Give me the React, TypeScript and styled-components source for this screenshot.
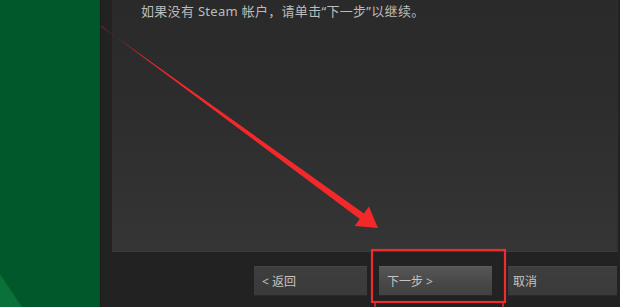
import React from "react";
import styled, { createGlobalStyle } from "styled-components";

const Global = createGlobalStyle`
  html, body { margin: 0; padding: 0; background: #1d1d1d; }
  body { font-family: "Noto Sans", "Noto Sans CJK SC", sans-serif; }
`;

const Screen = styled.div`
  position: relative;
  width: 620px;
  height: 307px;
  display: flex;
  overflow: hidden;
  background: #1e1e1e;
`;

const GreenPanel = styled.div`
  position: relative;
  width: 100px;
  flex: 0 0 100px;
  background: #01582b;
  &::after {
    content: "";
    position: absolute;
    left: 0;
    bottom: 0;
    width: 22px;
    height: 33px;
    background: #0a7138;
    clip-path: polygon(0 0, 100% 100%, 0 100%);
  }
`;

const Window = styled.div`
  flex: 1;
  display: flex;
  flex-direction: column;
  background: #222222;
  border-left: 1px solid #1a1a1a;
`;

const Body = styled.div`
  flex: 0 0 252px;
  display: flex;
  padding: 0 2px 0 11px;
`;

const Panel = styled.div`
  flex: 1;
  background: linear-gradient(#2a2a2a, #2d2d2d 45%, #353535);
  border-right: 1px solid #2f2f2f;
  border-bottom: 1px solid #3a3a3a;
  padding: 0 0 0 29px;
`;

const Message = styled.p`
  margin: 0;
  padding-top: 1px;
  font-size: 13px;
  line-height: 20px;
  letter-spacing: 0.3px;
  color: #bcbcbc;
  white-space: nowrap;
`;

const Footer = styled.div`
  flex: 1;
  display: flex;
  justify-content: flex-end;
  align-items: flex-start;
  padding: 14px 3px 0 0;
`;

const Button = styled.div<{ $primary?: boolean; $w: number; $gap: number; $pad: number }>`
  box-sizing: border-box;
  width: ${(p) => p.$w}px;
  height: 30px;
  margin-left: ${(p) => p.$gap}px;
  padding-left: ${(p) => p.$pad}px;
  display: flex;
  align-items: center;
  font-size: 12px;
  color: #c4c4c4;
  white-space: nowrap;
  background: ${(p) =>
    p.$primary ? "linear-gradient(#565656, #474747 60%, #424242)" : "linear-gradient(#3e3e3e, #3a3a3a)"};
  border-top: 1px solid ${(p) => (p.$primary ? "#5e5e5e" : "#444")};
  border-bottom: 1px solid #2a2a2a;
`;

const Overlay = styled.svg`
  position: absolute;
  left: 0;
  top: 0;
  pointer-events: none;
`;

export default function App() {
  return (
    <>
      <Global />
      <Screen>
        <GreenPanel />
        <Window>
          <Body>
            <Panel>
              <Message>如果没有 Steam 帐户，请单击“下一步”以继续。</Message>
            </Panel>
          </Body>
          <Footer>
            <Button $w={113} $gap={0} $pad={8}>&lt; 返回</Button>
            <Button $primary $w={113} $gap={12} $pad={8}>下一步 &gt;</Button>
            <Button $w={109} $gap={16} $pad={5}>取消</Button>
          </Footer>
        </Window>
        <Overlay width="620" height="307" viewBox="0 0 620 307">
          <polygon
            points="100.7,25.6 101.3,26.4 363.9,213.4 368.9,206.5 378,228 354.7,225.9 359.7,219"
            fill="#f2292b"
          />
          <rect x="372" y="250" width="133" height="52" fill="none" stroke="#ee2b2e" strokeWidth="2.2" />
          <line x1="375" y1="302" x2="375" y2="307" stroke="#ee2b2e" strokeWidth="1.5" />
          <line x1="503" y1="302" x2="503" y2="307" stroke="#ee2b2e" strokeWidth="1.5" />
        </Overlay>
      </Screen>
    </>
  );
}
